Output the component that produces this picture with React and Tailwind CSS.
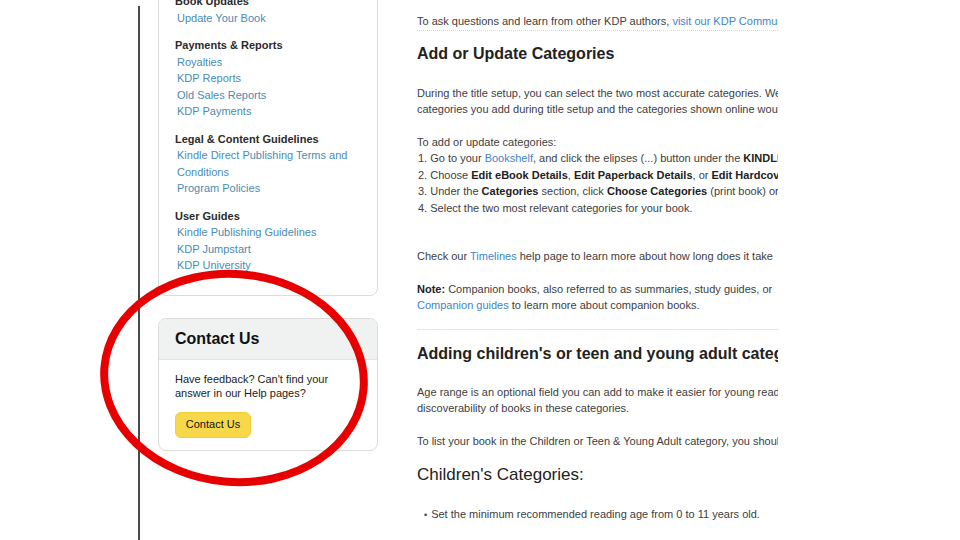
const sideGroups = [
  { title: 'Book Updates', links: ['Update Your Book'] },
  { title: 'Payments & Reports', links: ['Royalties', 'KDP Reports', 'Old Sales Reports', 'KDP Payments'] },
  {
    title: 'Legal & Content Guidelines',
    links: ['Kindle Direct Publishing Terms and Conditions', 'Program Policies'],
  },
  { title: 'User Guides', links: ['Kindle Publishing Guidelines', 'KDP Jumpstart', 'KDP University'] },
]

function Link({ children }) {
  return <span className="text-[#3f84c5]">{children}</span>
}

function SideCard() {
  return (
    <div className="-mt-[33px] rounded-[8px] border border-[#dcdcdc] bg-white pl-4 pr-3 pt-[25px] pb-[21px]">
      {sideGroups.map((group, i) => (
        <div key={group.title} className={i === 0 ? '' : 'mt-[11px]'}>
          <p className="text-[11px] font-bold leading-[16.5px] text-[#2b2b2b]">{group.title}</p>
          {group.links.map((link) => (
            <p key={link} className="pl-[2px] text-[11px] leading-[16.5px] text-[#4a8bb2]">
              {link}
            </p>
          ))}
        </div>
      ))}
    </div>
  )
}

function ContactCard() {
  return (
    <div className="mt-[22px] overflow-hidden rounded-[8px] border border-[#dcdcdc] bg-white">
      <div className="flex h-[41px] items-center border-b border-[#e3e3e3] bg-[#f0f2f2] px-4">
        <h3 className="text-[16px] font-bold text-[#111]">Contact Us</h3>
      </div>
      <div className="px-4 pt-[12px] pb-[12px]">
        <p className="text-[11px] leading-[14px] text-[#222]">
          Have feedback? Can't find your
          <br />
          answer in our Help pages?
        </p>
        <button
          type="button"
          className="mt-[12px] h-[26px] w-[76px] rounded-[6px] border border-[#f2d035] bg-[#f7d84b] text-[11px] text-[#111]"
        >
          Contact Us
        </button>
      </div>
    </div>
  )
}

function MainContent() {
  return (
    <div className="ml-[39px] w-[361px] shrink-0 overflow-hidden whitespace-nowrap pt-[13px] text-[11px] leading-[16.5px] text-[#404040]">
      <p className="border-b border-dotted border-[#d8d8d8]">
        To ask questions and learn from other KDP authors, <Link>visit our KDP Community</Link>.
      </p>
      <h2 className="mt-[13px] text-[16px] font-bold leading-[20px] text-[#222]">Add or Update Categories</h2>
      <p className="mt-[21px]">
        During the title setup, you can select the two most accurate categories. We may
        <br />
        categories you add during title setup and the categories shown online would
      </p>
      <p className="mt-4">To add or update categories:</p>
      <ol className="pl-[1px]">
        <li>
          1. Go to your <Link>Bookshelf</Link>, and click the elipses (...) button under the{' '}
          <b className="text-[#222]">KINDLE</b>
        </li>
        <li>
          2. Choose <b className="text-[#222]">Edit eBook Details</b>, <b className="text-[#222]">Edit Paperback Details</b>, or{' '}
          <b className="text-[#222]">Edit Hardcover</b>
        </li>
        <li>
          3. Under the <b className="text-[#222]">Categories</b> section, click{' '}
          <b className="text-[#222]">Choose Categories</b> (print book) or
        </li>
        <li>4. Select the two most relevant categories for your book.</li>
      </ol>
      <p className="mt-[31.5px]">
        Check our <Link>Timelines</Link> help page to learn more about how long does it take
      </p>
      <p className="mt-[16.5px]">
        <b className="text-[#222]">Note:</b> Companion books, also referred to as summaries, study guides, or
        <br />
        <Link>Companion guides</Link> to learn more about companion books.
      </p>
      <div className="mt-[15px] h-px bg-[#e7e7e7]" />
      <h2 className="mt-[14px] text-[16px] font-bold leading-[20px] text-[#222]">
        Adding children's or teen and young adult categories
      </h2>
      <p className="mt-[20px]">
        Age range is an optional field you can add to make it easier for young readers
        <br />
        discoverability of books in these categories.
      </p>
      <p className="mt-4">To list your book in the Children or Teen &amp; Young Adult category, you should</p>
      <h3 className="mt-4 text-[17px] leading-[20px] text-[#222]">Children's Categories:</h3>
      <p className="mt-[21px] pl-[7px]">
        <span className="mr-[4px] text-[9px]">•</span>Set the minimum recommended reading age from 0 to 11 years old.
      </p>
    </div>
  )
}

export default function App() {
  return (
    <div
      className="relative flex h-[540px] w-[960px] overflow-hidden bg-white"
      style={{ fontFamily: '"Liberation Sans", Arial, sans-serif' }}
    >
      <div className="w-[138px] shrink-0" />
      <div className="mt-[6px] w-[2px] shrink-0 bg-[#4a4a4a]" />
      <div className="ml-[18px] w-[220px] shrink-0">
        <SideCard />
        <ContactCard />
      </div>
      <MainContent />
      <svg className="pointer-events-none absolute inset-0" width="960" height="540" viewBox="0 0 960 540">
        <ellipse
          cx="234"
          cy="378"
          rx="130"
          ry="104"
          transform="rotate(5 234 378)"
          fill="none"
          stroke="#e60000"
          strokeWidth="8"
        />
      </svg>
    </div>
  )
}
